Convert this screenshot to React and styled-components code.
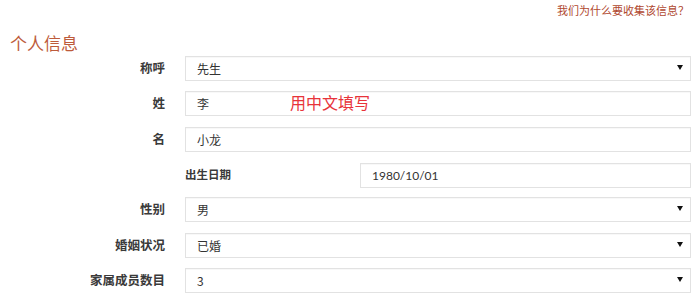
import styled, { createGlobalStyle } from 'styled-components'
import React from 'react'

const GlobalStyle = createGlobalStyle`
  html, body {
    margin: 0;
    padding: 0;
    background: #fff;
    font-family: "Noto Sans CJK SC", "Noto Sans", sans-serif;
    color: #333;
  }
`

const Page = styled.div`
  width: 700px;
  height: 306px;
  overflow: hidden;
  box-sizing: border-box;
  padding: 2px 9px 0 10px;
`

const TopBar = styled.div`
  display: flex;
  justify-content: flex-end;
  height: 16px;
`

const WhyLink = styled.a`
  font-size: 11px;
  line-height: 16px;
  color: #b0482f;
  text-decoration: none;
  margin-right: 2px;
`

const Title = styled.h2`
  margin: 13px 0 0;
  font-size: 17px;
  line-height: 24px;
  font-weight: 400;
  color: #bd5b3b;
`

const Form = styled.div`
  display: flex;
  flex-direction: column;
  gap: 10.35px;
`

const Row = styled.div`
  display: grid;
  grid-template-columns: 155px 1fr;
  column-gap: 20px;
  align-items: center;
  height: 25px;
`

const Label = styled.label`
  text-align: right;
  font-size: 12.5px;
  font-weight: 700;
  color: #3a3a3a;
`

const Field = styled.div`
  position: relative;
  height: 25px;
  ${p => p.$select && `
    &::after {
      content: '';
      position: absolute;
      right: 8px;
      top: 10px;
      border-left: 3px solid transparent;
      border-right: 3px solid transparent;
      border-top: 5px solid #111;
      pointer-events: none;
    }
  `}
`

const boxStyle = `
  width: 100%;
  height: 25px;
  box-sizing: border-box;
  border: 1px solid #e2e2e2;
  box-shadow: inset 0 1px 1px rgba(0,0,0,0.03);
  background: #fff;
  padding: 0 11px;
  font-family: "Noto Sans CJK SC", "Noto Sans", sans-serif;
  font-size: 12px;
  color: #333;
  outline: none;
  border-radius: 0;
`

const Select = styled.select`
  ${boxStyle}
  appearance: none;
  -webkit-appearance: none;
`

const Input = styled.input`
  ${boxStyle}
  font-family: ${p => p.$latin ? '"Lato", "Noto Sans", sans-serif' : '"Noto Sans CJK SC", "Noto Sans", sans-serif'};
`

const Hint = styled.span`
  position: absolute;
  left: 105px;
  top: 2px;
  font-size: 16px;
  line-height: 20px;
  color: #e8333a;
  pointer-events: none;
`

const SubRow = styled.div`
  display: grid;
  grid-template-columns: 175px 1fr;
  align-items: center;
`

const SubLabel = styled.label`
  font-size: 11.5px;
  font-weight: 700;
  color: #3a3a3a;
`

function SelectRow(props) {
  return (
    <Row>
      <Label>{props.label}</Label>
      <Field $select>
        <Select defaultValue={props.value}>
          {props.options.map(o => <option key={o}>{o}</option>)}
        </Select>
      </Field>
    </Row>
  )
}

function InputRow(props) {
  return (
    <Row>
      <Label>{props.label}</Label>
      <Field>
        <Input defaultValue={props.value} />
        {props.hint && <Hint>{props.hint}</Hint>}
      </Field>
    </Row>
  )
}

function App() {
  return (
    <>
      <GlobalStyle />
      <Page>
        <TopBar>
          <WhyLink href="#">我们为什么要收集该信息？</WhyLink>
        </TopBar>
        <Title>个人信息</Title>
        <Form>
          <SelectRow label="称呼" value="先生" options={['先生', '女士', '小姐']} />
          <InputRow label="姓" value="李" hint="用中文填写" />
          <InputRow label="名" value="小龙" />
          <Row>
            <span />
            <SubRow>
              <SubLabel>出生日期</SubLabel>
              <Field>
                <Input $latin defaultValue="1980/10/01" />
              </Field>
            </SubRow>
          </Row>
          <SelectRow label="性别" value="男" options={['男', '女']} />
          <SelectRow label="婚姻状况" value="已婚" options={['未婚', '已婚']} />
          <SelectRow label="家属成员数目" value="3" options={['1', '2', '3', '4', '5']} />
        </Form>
      </Page>
    </>
  )
}

export default App
